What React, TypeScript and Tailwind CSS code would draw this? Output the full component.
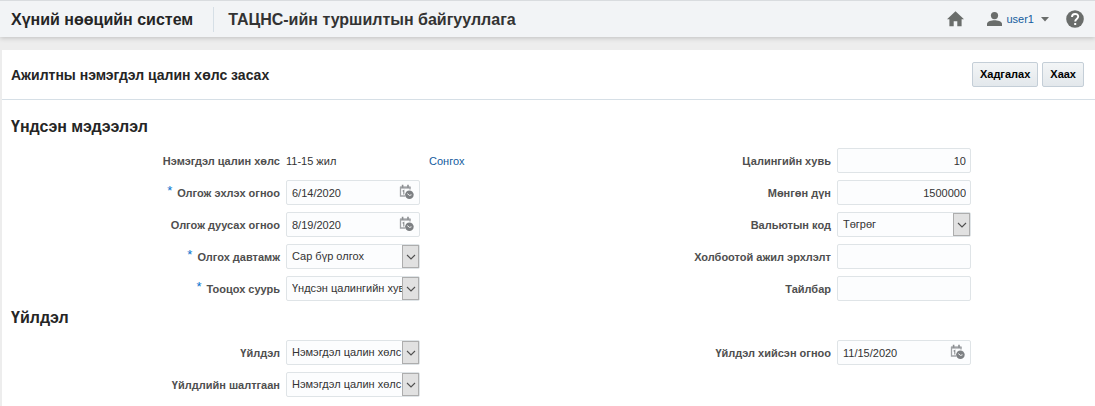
import { useId, type ReactNode } from 'react';

const fieldBox =
  'h-[25px] w-full rounded-[2px] border border-[#dfe4e7] bg-[#fcfdfe] text-[11px] text-[#333333] outline-none focus:border-[#0572ce]';

function Row({
  label,
  id,
  required = false,
  children,
}: {
  label: string;
  id?: string;
  required?: boolean;
  children: ReactNode;
}) {
  return (
    <div className="flex min-h-[25px] items-center gap-1.5">
      <label
        htmlFor={id}
        className="flex w-[278px] shrink-0 items-center justify-end gap-[5px] pt-px text-[11px] font-bold text-[#4f4f4f]"
      >
        {required && <span className="pb-1 text-[13px] leading-3 font-normal text-[#0572ce]">*</span>}
        {label}
      </label>
      {children}
    </div>
  );
}

function CalendarClock() {
  return (
    <svg width="16" height="16" viewBox="0 0 16 16" aria-hidden="true">
      <path d="M6 12H1.500V3.500h9.500v2" fill="none" stroke="#a0a3a6" strokeWidth="1.3" />
      <path d="M1 2.500h10.500v2H1z" fill="#a0a3a6" />
      <path d="M3.600 .8v3M9 .8v3" stroke="#8b8e91" strokeWidth="1.6" />
      <path d="M3.600 7.300l1.200-.8v4" fill="none" stroke="#8b8e91" strokeWidth="1.1" />
      <circle cx="10.400" cy="10.800" r="4.300" fill="#7d8083" />
      <path d="M8.300 9.600l2.200 1.800 2-.6" fill="none" stroke="#ffffff" strokeWidth="0.9" />
    </svg>
  );
}

function DateRow({ label, value, required }: { label: string; value: string; required?: boolean }) {
  const id = useId();
  return (
    <Row label={label} id={id} required={required}>
      <div className="relative w-[134px]">
        <input id={id} defaultValue={value} className={`${fieldBox} pr-6 pl-[5px]`} />
        <button type="button" aria-label="Огноо сонгох" className="absolute top-1 right-[5px]">
          <CalendarClock />
        </button>
      </div>
    </Row>
  );
}

function TextRow({ label, value = '' }: { label: string; value?: string }) {
  const id = useId();
  return (
    <Row label={label} id={id}>
      <div className="w-[134px]">
        <input id={id} defaultValue={value} className={`${fieldBox} px-1 text-right`} />
      </div>
    </Row>
  );
}

function SelectRow({ label, value, required }: { label: string; value: string; required?: boolean }) {
  const id = useId();
  return (
    <Row label={label} id={id} required={required}>
      <div className="relative w-[134px]">
        <select id={id} className={`${fieldBox} appearance-none pr-[17px] pl-[5px]`}>
          <option>{value}</option>
        </select>
        <span className="pointer-events-none absolute top-px right-px bottom-px flex w-[17px] items-center justify-center border border-[#adadad] bg-[#e1e1e1]">
          <svg width="10" height="6" viewBox="0 0 10 6" aria-hidden="true">
            <path d="M1 1l4 4 4-4" fill="none" stroke="#505050" strokeWidth="1.1" />
          </svg>
        </span>
      </div>
    </Row>
  );
}

function ActionButton({ children }: { children: ReactNode }) {
  return (
    <button
      type="button"
      className="h-[25px] rounded-[2px] border border-[#c4ced7] bg-linear-to-b from-[#f3f5f6] to-[#e3e8ec] px-[7px] text-[11px] font-bold text-black"
    >
      {children}
    </button>
  );
}

export default function App() {
  return (
    <div className="min-h-screen bg-[#ededed] font-['Liberation_Sans',Arial,sans-serif] text-[11px] text-[#333333]">
      <header className="flex h-[37px] items-center border-t border-[#d9dcdf] bg-[#f2f4f6] pr-[11px] pl-[11px] shadow-[0_1px_5px_rgba(0,0,0,0.2)]">
        <span className="pt-0.5 text-base font-bold text-[#252525]">Хүний нөөцийн систем</span>
        <span className="mr-[14px] ml-5 h-[25px] w-px bg-[#d6dfe6]" />
        <span className="pt-0.5 text-base font-bold text-[#333333]">ТАЦНС-ийн туршилтын байгууллага</span>
        <nav className="ml-auto flex items-center">
          <a href="#home" aria-label="Нүүр">
            <svg width="17" height="16" viewBox="0 0 17 16" fill="#6a6d6b" aria-hidden="true">
              <path d="M8.500 .3 0 8.200h2.400v7.100h4.300v-5h3.600v5h4.300V8.200H17z" />
            </svg>
          </a>
          <button type="button" className="ml-[23px] flex items-center">
            <svg width="15" height="14" viewBox="0 0 15 14" fill="#6a6d6b" aria-hidden="true">
              <circle cx="7.5" cy="3.6" r="3.6" />
              <path d="M0 14v-2.2C0 9.3 4.8 8.2 7.5 8.2s7.5 1.1 7.5 3.6V14z" />
            </svg>
            <span className="ml-1 text-[11px] text-[#145c9e]">user1</span>
            <svg className="ml-[7px]" width="8" height="5" viewBox="0 0 8 5" fill="#6a6d6b" aria-hidden="true">
              <path d="M0 0h8L4 4.6z" />
            </svg>
          </button>
          <a href="#help" aria-label="Тусламж" className="ml-[17px]">
            <svg width="18" height="18" viewBox="0 0 18 18" aria-hidden="true">
              <circle cx="9" cy="9" r="8.8" fill="#6a6d6b" />
              <path d="M6 7c0-4 6.2-4 6.2-.4C12.2 9 9.2 9 9.2 11.5" fill="none" stroke="#ffffff" strokeWidth="1.9" />
              <path d="M8.2 13h2v2h-2z" fill="#ffffff" />
            </svg>
          </a>
        </nav>
      </header>

      <main className="mt-[13px] ml-0.5 min-h-[356px] bg-white">
        <div className="flex h-[50px] items-center justify-between border-b border-[#d6dfe6] pr-[11px] pl-[9px]">
          <h1 className="text-sm font-bold text-[#252525]">Ажилтны нэмэгдэл цалин хөлс засах</h1>
          <div className="flex gap-1">
            <ActionButton>Хадгалах</ActionButton>
            <ActionButton>Хаах</ActionButton>
          </div>
        </div>

        <form>
          <h2 className="pt-[15px] pl-[9px] text-base leading-6 font-bold text-[#252525]">Үндсэн мэдээлэл</h2>
          <div className="mt-[9px] grid grid-cols-2 items-start gap-x-[9px]">
            <div className="flex flex-col gap-[7px]">
              <Row label="Нэмэгдэл цалин хөлс">
                <span className="w-[137px] pt-px">11-15 жил</span>
                <a href="#select" className="pt-px text-[#145c9e]">
                  Сонгох
                </a>
              </Row>
              <DateRow label="Олгож эхлэх огноо" value="6/14/2020" required />
              <DateRow label="Олгож дуусах огноо" value="8/19/2020" />
              <SelectRow label="Олгох давтамж" value="Сар бүр олгох" required />
              <SelectRow label="Тооцох суурь" value="Үндсэн цалингийн хувь" required />
            </div>
            <div className="flex flex-col gap-[7px]">
              <TextRow label="Цалингийн хувь" value="10" />
              <TextRow label="Мөнгөн дүн" value="1500000" />
              <SelectRow label="Вальютын код" value="Төгрөг" />
              <TextRow label="Холбоотой ажил эрхлэлт" />
              <TextRow label="Тайлбар" />
            </div>
          </div>

          <h2 className="mt-[5px] pl-[9px] text-base leading-6 font-bold text-[#252525]">Үйлдэл</h2>
          <div className="mt-[10px] grid grid-cols-2 items-start gap-x-[9px]">
            <div className="flex flex-col gap-[7px]">
              <SelectRow label="Үйлдэл" value="Нэмэгдэл цалин хөлс засах" />
              <SelectRow label="Үйлдлийн шалтгаан" value="Нэмэгдэл цалин хөлс засах" />
            </div>
            <DateRow label="Үйлдэл хийсэн огноо" value="11/15/2020" />
          </div>
        </form>
      </main>
    </div>
  );
}
